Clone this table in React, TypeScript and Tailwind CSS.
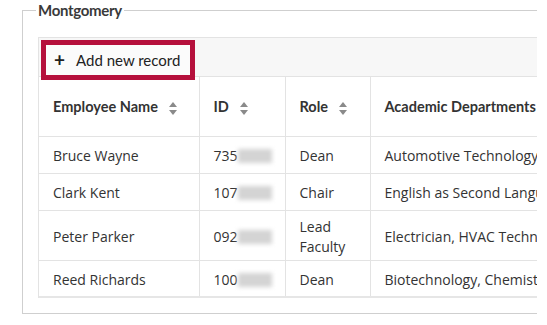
const rows = [
  { name: 'Bruce Wayne', id: '735', role: 'Dean', depts: 'Automotive Technology' },
  { name: 'Clark Kent', id: '107', role: 'Chair', depts: 'English as Second Language' },
  { name: 'Peter Parker', id: '092', role: 'Lead Faculty', depts: 'Electrician, HVAC Technology' },
  { name: 'Reed Richards', id: '100', role: 'Dean', depts: 'Biotechnology, Chemistry' },
];

function SortIcon() {
  return (
    <svg width="8" height="13" viewBox="0 0 8 13" className="inline-block ml-[11px] align-middle">
      <path d="M4 0 L8 5 L0 5 Z" fill="#8a8a8a" />
      <path d="M4 13 L8 8 L0 8 Z" fill="#8a8a8a" />
    </svg>
  );
}

function HeadCell({ label, sort = true, last = false }: { label: string; sort?: boolean; last?: boolean }) {
  return (
    <th
      className={
        'h-[59px] px-[14px] pt-[2px] text-left font-bold text-[14.5px] text-[#333] whitespace-nowrap border-b border-[#e3e3e3] ' +
        (last ? '' : 'border-r')
      }
      style={{ fontFamily: 'Lato, "Open Sans", sans-serif' }}
    >
      {label}
      {sort && <SortIcon />}
    </th>
  );
}

export default function App() {
  return (
    <div className="w-[547px] h-[325px] bg-white">
      <div className="w-[537px] h-[325px] overflow-hidden">
        <fieldset className="ml-[22px] w-[560px] border border-[#cfcfcf] pl-[13px] pr-0 pt-[17px] pb-[15px]">
          <legend
            className="px-[2px] text-[15px] leading-[20px] font-bold text-[#3a3a3a] tracking-[-0.3px]"
            style={{ fontFamily: 'Lato, "Open Sans", sans-serif' }}
          >
            Montgomery
          </legend>
          <div className="ml-[2px] border-l border-[#e3e3e3] overflow-hidden">
            <div className="h-[40px] bg-[#f7f7f7] border-t border-b border-[#e3e3e3] pl-[2px] pt-[2px]">
              <button
                className="relative z-10 h-[40px] flex items-center gap-[11px] pl-[8px] pr-[10px] bg-[#fbfbfb] border-[5px] border-[#b5103c] text-[15px] text-[#222]"
                style={{ fontFamily: 'Lato, "Open Sans", sans-serif' }}
              >
                <span className="text-[19px] font-bold leading-none -mt-[2px]">+</span>
                Add new record
              </button>
            </div>
            <table
              className="table-fixed border-collapse w-[620px] border-b-2 border-[#e6e6e6]"
              style={{ fontFamily: '"Open Sans", sans-serif' }}
            >
              <colgroup>
                <col className="w-[160px]" />
                <col className="w-[86px]" />
                <col className="w-[85px]" />
                <col className="w-[289px]" />
              </colgroup>
              <thead>
                <tr>
                  <HeadCell label="Employee Name" />
                  <HeadCell label="ID" />
                  <HeadCell label="Role" />
                  <HeadCell label="Academic Departments" sort={false} last />
                </tr>
              </thead>
              <tbody className="text-[14px] text-[#333] leading-[20px]">
                {rows.map((r) => (
                  <tr key={r.name} className="h-[37px] border-b border-[#e3e3e3] last:border-b-0">
                    <td className="px-[14px] pt-[6px] pb-[3px] border-r border-[#e3e3e3] whitespace-nowrap">{r.name}</td>
                    <td className="px-[14px] pt-[6px] pb-[3px] border-r border-[#e3e3e3] whitespace-nowrap">
                      {r.id}
                      <span className="inline-block align-middle w-[34px] h-[14px] bg-[#d4d4d4] blur-[2px] -mt-[2px]" />
                    </td>
                    <td className="px-[14px] pt-[6px] pb-[3px] border-r border-[#e3e3e3]">{r.role}</td>
                    <td className="px-[14px] pt-[6px] pb-[3px] whitespace-nowrap">{r.depts}</td>
                  </tr>
                ))}
              </tbody>
            </table>
          </div>
        </fieldset>
      </div>
    </div>
  );
}
